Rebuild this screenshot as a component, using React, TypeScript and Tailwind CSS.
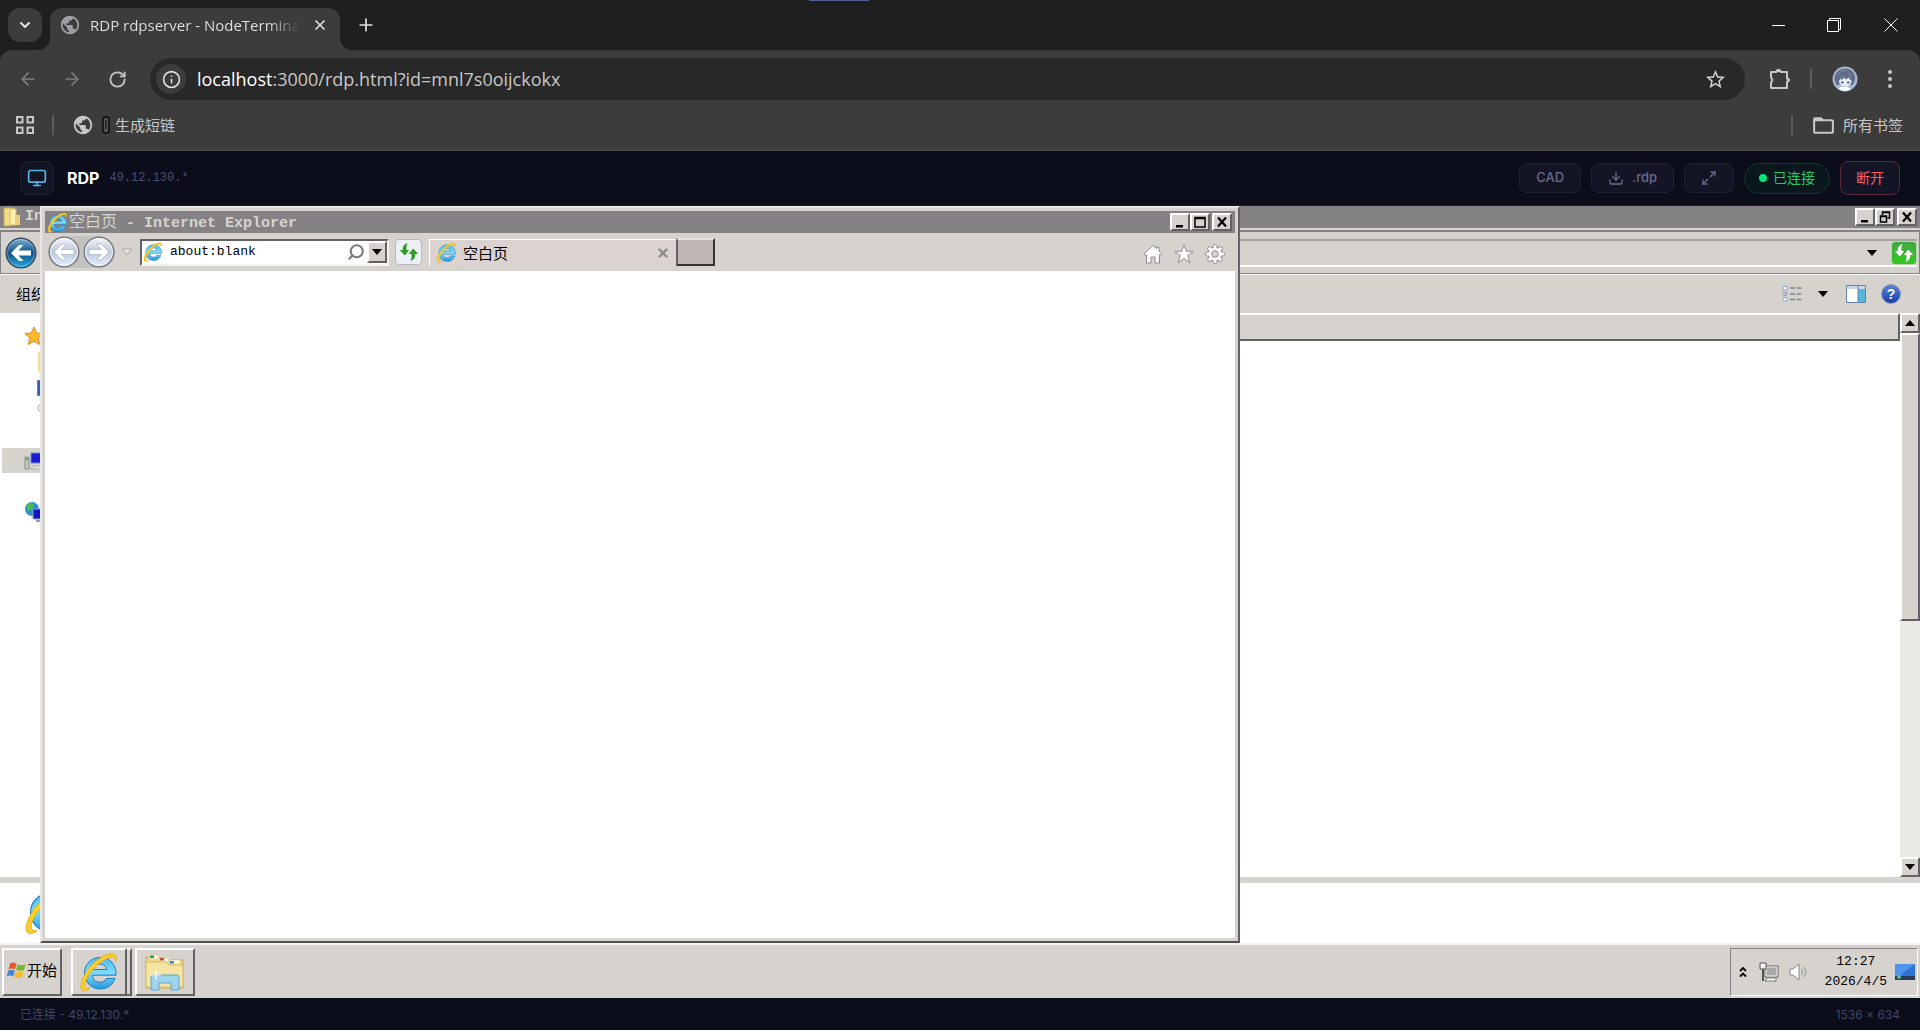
import React from "react"
import {
  ChevronDown,
  ArrowLeft,
  ArrowRight,
  RotateCw,
  X,
  Plus,
  Info,
  Monitor,
  Download,
  Maximize2,
  Search,
} from "lucide-react"
import { MdPublic, MdStarBorder, MdFolderOpen } from "react-icons/md"

const cjk = "font-['Noto_Sans_CJK_SC',sans-serif]"
const mono = "font-['Liberation_Mono','Noto_Sans_CJK_SC',monospace]"

// classic Windows bevels
const raised =
  "bg-[#d6d3ce] border-2 border-t-white border-l-white border-b-[#636163] border-r-[#636163]"
const sunken =
  "border-2 border-t-[#636163] border-l-[#636163] border-b-[#f4f2ef] border-r-[#f4f2ef]"

function IELogo({ className }: { className: string }) {
  return (
    <svg viewBox="0 0 40 40" className={className} aria-hidden="true">
      <defs>
        <linearGradient id="ieBlue" x1="0" y1="0" x2="0" y2="1">
          <stop offset="0" stopColor="#4fbdf0" />
          <stop offset=".5" stopColor="#7fdcfb" />
          <stop offset="1" stopColor="#2795dd" />
        </linearGradient>
      </defs>
      <path
        d="M21 5.500C12 5.500 5.500 12.500 5.500 21S12 37 21 37c7.500 0 13-4 15-10.500h-8.500c-1.300 2.400-3.400 3.700-6.500 3.700-4.500 0-7.300-2.700-7.500-7H37C37.600 12.500 31 5.500 21 5.500zM13.700 17.500c.8-3.400 3.300-5.500 7.100-5.500s6.300 2.100 7 5.500z"
        fill="url(#ieBlue)"
        stroke="#1c7fc4"
        strokeWidth="1"
      />
      <path
        d="M36.500 9.500C38 6 37.500 3 34.500 2 27 0 13 10 6 22 2 29 0 37 4 38.500c2 .8 4.500-.3 7-2.300-7 1.600-6-5.200-1.500-12.700C15 14.500 26 5.500 33 5.200c2.500 0 3.200 1.800 3.500 4.300z"
        fill="#f9cf2c"
        stroke="#e0a512"
        strokeWidth=".7"
      />
    </svg>
  )
}

function OrbIcon({ blue, flip, className }: { blue?: boolean; flip?: boolean; className: string }) {
  const id = blue ? "orbBlue" : "orbPale"
  return (
    <svg viewBox="0 0 32 32" className={className} aria-hidden="true">
      <defs>
        <linearGradient id={id} x1="0" y1="0" x2="0" y2="1">
          <stop offset="0" stopColor={blue ? "#7fb4d4" : "#f4f6fb"} />
          <stop offset=".5" stopColor={blue ? "#0d4f86" : "#bcc8dc"} />
          <stop offset="1" stopColor={blue ? "#25b3ea" : "#e6f2ff"} />
        </linearGradient>
      </defs>
      <circle cx="16" cy="16" r="14.800" fill={`url(#${id})`} stroke={blue ? "#3c4e60" : "#7c7e86"} strokeWidth="1.500" />
      <circle cx="16" cy="16" r="13.500" fill="none" stroke="#fff" strokeOpacity={blue ? ".3" : ".8"} />
      <path
        d="M6 16l8-8h4.500l-5 5.500H26v5H13.500l5 5.500H14z"
        fill="#fff"
        stroke={blue ? "none" : "#a0aabe"}
        strokeWidth=".6"
        transform={flip ? "translate(32 0) scale(-1 1)" : undefined}
      />
    </svg>
  )
}

function RefreshArrows({ color, className }: { color: string; className: string }) {
  return (
    <svg viewBox="0 0 20 20" className={className} fill={color} aria-hidden="true">
      <path d="M8.500 1C5 2 3.700 4.500 3.700 8H.8l5 5.500 4.400-5.500H7.500C7.300 5.500 7.500 3 8.500 1z" />
      <path d="M11.500 19c3.500-1 4.800-3.500 4.800-7h2.900l-5-5.500L9.800 12h2.700c.2 2.500 0 5-1 7z" />
    </svg>
  )
}

function Caret({ className = "" }: { className?: string }) {
  return (
    <svg viewBox="0 0 10 6" className={`w-2.5 h-1.5 ${className}`} aria-hidden="true">
      <path d="M0 0h10L5 6z" fill="currentColor" />
    </svg>
  )
}

function CaptionButtons({ restore }: { restore?: boolean }) {
  const button = `w-5 h-[18px] flex items-center justify-center text-black ${raised}`
  return (
    <div className="flex shrink-0">
      <button aria-label="Minimize" className={button}>
        <svg viewBox="0 0 14 12" className="w-3.5 h-3">
          <path d="M3 9h7v2.500H3z" />
        </svg>
      </button>
      <button aria-label={restore ? "Restore" : "Maximize"} className={button}>
        <svg viewBox="0 0 14 12" className="w-3.5 h-3" fill="none" stroke="#000">
          {restore ? (
            <>
              <path d="M4.500 4V1h7v6H9.500M4.500 1.500h7" strokeWidth="1.500" />
              <path d="M2.500 5h6v6h-6zM2.500 5.500h6" strokeWidth="1.500" />
            </>
          ) : (
            <path d="M2 1.500h10v9.500H2zM2 2.500h10" strokeWidth="1.500" />
          )}
        </svg>
      </button>
      <button aria-label="Close" className={`${button} ml-0.5`}>
        <svg viewBox="0 0 14 12" className="w-3.5 h-3" stroke="#000" strokeWidth="2.200">
          <path d="M3 1.500l8 9M11 1.500l-8 9" />
        </svg>
      </button>
    </div>
  )
}

function BrowserChrome() {
  return (
    <header className="bg-[#1f1f1f] text-[#e3e3e3] font-['Open_Sans','Noto_Sans_CJK_SC',sans-serif]">
      {/* Tab strip */}
      <div className="relative flex h-[50px] pl-2">
        <div className="absolute top-0 left-[809px] w-[60px] h-px bg-[#565f94]" />
        <button aria-label="Search tabs" className="mt-2 w-[34px] h-[34px] rounded-xl bg-[#3c3c3c] flex items-center justify-center">
          <ChevronDown className="w-4 h-4" strokeWidth={3} />
        </button>
        <div className="relative ml-2 mt-2 w-[290px] h-[42px] rounded-t-xl bg-[#3c3c3c] flex items-center pl-[9px] pr-3 pb-2">
          <svg viewBox="0 0 12 12" className="absolute -left-3 bottom-0 w-3 h-3" fill="#3c3c3c">
            <path d="M12 0v12H0A12 12 0 0 0 12 0z" />
          </svg>
          <svg viewBox="0 0 12 12" className="absolute -right-3 bottom-0 w-3 h-3" fill="#3c3c3c">
            <path d="M0 0v12h12A12 12 0 0 1 0 0z" />
          </svg>
          <MdPublic className="w-[22px] h-[22px] text-[#9aa0a6] shrink-0" />
          <span className="ml-[9px] flex-1 overflow-hidden whitespace-nowrap text-[15px] leading-5 bg-gradient-to-r from-[#e3e3e3] from-85% to-[#3c3c3c] bg-clip-text text-transparent">
            RDP rdpserver - NodeTerminal
          </span>
          <button aria-label="Close tab" className="ml-3">
            <X className="w-4 h-4" strokeWidth={2.5} />
          </button>
        </div>
        <button aria-label="New tab" className="ml-4">
          <Plus className="w-5 h-5" />
        </button>
        <div className="ml-auto flex">
          <button aria-label="Minimize window" className="w-14 flex items-center justify-center">
            <span className="w-[13px] h-px bg-white" />
          </button>
          <button aria-label="Restore window" className="w-14 flex items-center justify-center">
            <svg viewBox="0 0 14 14" className="w-3.5 h-3.5" fill="none" stroke="#fff">
              <path d="M.5 2.500h11v11H.5zM2.500 2.500v-2h11v11h-2" />
            </svg>
          </button>
          <button aria-label="Close window" className="w-[58px] flex items-center justify-center">
            <svg viewBox="0 0 14 14" className="w-3.5 h-3.5" stroke="#fff">
              <path d="M.5.5l13 13M13.500.5l-13 13" />
            </svg>
          </button>
        </div>
      </div>

      {/* Address bar */}
      <div className="bg-[#3c3c3c] rounded-t-xl border-b border-[#4a4a4a]">
        <div className="flex items-center h-[58px] pl-[18px] pr-5">
          <button aria-label="Back" className="text-[#7d7d7d]">
            <ArrowLeft className="w-5 h-5" />
          </button>
          <button aria-label="Forward" className="ml-6 text-[#7d7d7d]">
            <ArrowRight className="w-5 h-5" />
          </button>
          <button aria-label="Reload" className="ml-[26px] text-[#c7c7c7]">
            <RotateCw className="w-[19px] h-[19px]" strokeWidth={2.3} />
          </button>
          <div className="ml-[23px] flex-1 h-[42px] rounded-full bg-[#282828] flex items-center pl-1.5 pr-[18px]">
            <button aria-label="Site information" className="w-[30px] h-[30px] rounded-full bg-[#3c3c3c] flex items-center justify-center">
              <Info className="w-[19px] h-[19px]" />
            </button>
            <div className="ml-[11px] flex-1 text-lg leading-6 text-[#c7c7c7]">
              <span className="text-white">localhost</span>:3000/rdp.html?id=mnl7s0oijckokx
            </div>
            <button aria-label="Bookmark this page" className="text-[#d0d0d0]">
              <MdStarBorder className="w-[23px] h-[23px]" />
            </button>
          </div>
          <button aria-label="Extensions" className="ml-6 text-[#c7c7c7]">
            <svg viewBox="0 0 22 22" className="w-[22px] h-[22px]" fill="none" stroke="currentColor" strokeWidth="2" strokeLinejoin="round">
              <path d="M2 4h5.500a2 2 0 0 1 4 0H18v6.500a2 2 0 0 1 0 3.500v6H2v-5.500a3.200 3.200 0 0 0 0-5z" />
              <path d="M7.500 3.500a2 2 0 0 1 4 0zM18.500 10a2 2 0 0 1 0 4z" fill="currentColor" strokeWidth="1" />
            </svg>
          </button>
          <span className="ml-[19px] w-0.5 h-5 bg-[#5c5c5c]" />
          <button aria-label="Profile" className="ml-5">
            <svg viewBox="0 0 26 26" className="w-[26px] h-[26px]">
              <circle cx="13" cy="13" r="12.500" fill="#a9b8d0" />
              <path d="M2.500 14C2 7 7 2.500 13.500 2.500S24 8 23 14.500L20.500 19 7 18.500 4.500 19z" fill="#5f6e8b" />
              <path d="M7 15l1.500-2.500 1 1.500 3-2.500 1 2 3.500-2 .5 2 2 1c0 3.500-2.500 6-6 6S7 18.500 7 15z" fill="#e6ebf3" />
              <path d="M6.500 23l2.500-2.500 3 .500 3-.500 4 2.500a12 12 0 0 1-12.500 0z" fill="#fff" />
              <path d="M9 16.500h2.500M15 16.500h2.500" stroke="#3d4a63" strokeWidth="1.500" />
              <path d="M6 8c2-3 5-4 8-3.500M11 9l-2 4M17 7l1 5" stroke="#8593ad" strokeWidth=".8" fill="none" />
            </svg>
          </button>
          <button aria-label="Menu" className="ml-[22px] px-1 text-[#c7c7c7]">
            <svg viewBox="0 0 4 18" className="w-3 h-[18px]" fill="currentColor">
              <circle cx="2" cy="2" r="2" />
              <circle cx="2" cy="9" r="2" />
              <circle cx="2" cy="16" r="2" />
            </svg>
          </button>
        </div>

        {/* Bookmarks */}
        <div className="flex items-center h-[42px] pb-2 pl-4 pr-[17px] text-[15px] leading-5 text-[#c7c7c7]">
          <button aria-label="Apps">
            <svg viewBox="0 0 18 18" className="w-[18px] h-[18px]" fill="none" stroke="currentColor" strokeWidth="2">
              <path d="M1 1h5.500v5.500H1zM11.500 1H17v5.500h-5.500zM1 11.500h5.500V17H1zM11.500 11.500H17V17h-5.500z" />
            </svg>
          </button>
          <span className="ml-[18px] w-0.5 h-5 bg-[#5c5c5c]" />
          <a href="#" className="ml-[18px] flex items-center">
            <MdPublic className="w-[22px] h-[22px]" />
            <svg viewBox="0 0 8 18" className="ml-2 w-2 h-[18px]" aria-hidden="true">
              <rect x="1" y="1" width="6" height="16" rx="2.500" fill="#555" stroke="#0c0c0c" strokeWidth="1.500" />
              <path d="M4 4v9" stroke="#222" strokeWidth="1.500" />
            </svg>
            <span className="ml-[5px]">生成短链</span>
          </a>
          <span className="ml-auto w-0.5 h-5 bg-[#5c5c5c]" />
          <button className="ml-[18px] flex items-center">
            <MdFolderOpen className="w-[25px] h-[25px]" />
            <span className="ml-[7px]">所有书签</span>
          </button>
        </div>
      </div>
    </header>
  )
}

function RdpHeader() {
  const button = "h-[30px] px-4 rounded-lg border border-[#1f2032] bg-[#131525] text-[#6a6b8c] flex items-center gap-2"
  return (
    <div className="flex items-center h-[55px] px-5 bg-[#0b0d1a] border-b border-[#1b1c2c] font-['Inter','Noto_Sans_CJK_SC',sans-serif] text-[13px] font-medium">
      <div className="w-[34px] h-[34px] rounded-lg border border-[#1f2032] bg-[#131525] flex items-center justify-center">
        <Monitor className="w-5 h-5 text-[#4fb6e8]" />
      </div>
      <h1 className="ml-[13px] text-base font-bold text-white">RDP</h1>
      <span className={`ml-2.5 text-xs font-normal text-[#4c4d70] ${mono}`}>49.12.130.*</span>
      <div className="ml-auto flex items-center gap-2.5">
        <button className={button}>CAD</button>
        <button className={button}>
          <Download className="w-4 h-4" />
          .rdp
        </button>
        <button aria-label="Fullscreen" className={button}>
          <Maximize2 className="w-4 h-4" />
        </button>
        <div className="h-[31px] px-3.5 rounded-full border border-[#0f3a33] bg-[#0a171d] text-sm font-normal text-[#22c96f] flex items-center gap-1.5">
          <span className="w-2 h-2 rounded-full bg-[#00e676]" />
          已连接
        </div>
        <button className="h-[34px] px-[15px] rounded-lg border border-[#57293a] bg-[#131525] text-sm font-normal text-[#ff5a64]">
          断开
        </button>
      </div>
    </div>
  )
}

function ExplorerWindow() {
  return (
    <section className={`h-full flex flex-col bg-[#d6d3ce] text-black ${cjk}`}>
      <div className="flex items-center h-[22px] pl-[3px] pr-[3px] bg-[#848284] text-[#d6d3ce]">
        <svg viewBox="0 0 18 20" className="w-[18px] h-5" aria-hidden="true">
          <path d="M1 1h9v3l-3 15H1z" fill="#f3dd86" stroke="#c9a94a" />
          <path d="M7 2h6v16H7z" fill="#fbeeb0" stroke="#d9bd60" />
          <path d="M12 8h5v10h-5z" fill="#ead07a" />
        </svg>
        <span className={`ml-1 mr-auto w-[15px] overflow-hidden text-[15px] leading-5 font-bold ${mono}`}>In</span>
        <CaptionButtons restore />
      </div>

      <div className="mt-0.5 h-11 border border-[#848284] border-t-2 flex items-center pl-1 pr-0.5">
        <OrbIcon blue className="w-8 h-8" />
        <div className="ml-24 flex-1 h-7 border-y-2 border-t-[#a5a2a0] border-b-white flex items-center justify-end gap-3.5">
          <button aria-label="Previous locations">
            <Caret />
          </button>
          <button aria-label="Refresh" className="w-[26px] h-6 rounded-sm border border-[#b5d8b0] bg-gradient-to-b from-[#3fa83f] to-[#35c81c] flex items-center justify-center">
            <RefreshArrows color="#fff" className="w-5 h-5" />
          </button>
        </div>
      </div>

      <div className="h-[39px] border-t border-white flex items-center pl-4 pr-[19px] text-[15px]">
        <button className="w-6 overflow-hidden whitespace-nowrap text-left">组织</button>
        <button aria-label="Change view" className="ml-auto">
          <svg viewBox="0 0 20 18" className="w-5 h-[18px]" fill="none">
            <path d="M1 1.500h4v3.500H1zM1 7h4v3.500H1zM1 12.500h4V16H1z" fill="#fff" stroke="#8fa4c4" />
            <path d="M8 3h5M14.500 3h5M8 9h5M14.500 9h5M8 14.500h5M14.500 14.500h5" stroke="#7f8793" strokeWidth="1.500" />
            <path d="M2.500 8h1.500v1.500H2.500z" fill="#d0302a" />
          </svg>
        </button>
        <button aria-label="More views" className="ml-4">
          <Caret />
        </button>
        <button aria-label="Preview pane" className="ml-[18px]">
          <svg viewBox="0 0 20 18" className="w-5 h-[18px]">
            <path d="M.5.5h19v17H.5z" fill="#fff" stroke="#5f83ad" />
            <path d="M1 1h18v3H1z" fill="#c8d8ea" />
            <path d="M12 4h7v13h-7z" fill="#59b5dc" />
            <path d="M12 1v16" stroke="#5f83ad" />
          </svg>
        </button>
        <button aria-label="Help" className="ml-[15px] w-5 h-5 rounded-full border border-[#8f98b0] bg-gradient-to-b from-[#5b82dc] to-[#173ca8] text-white text-sm leading-4 font-bold font-['Liberation_Sans',sans-serif]">
          ?
        </button>
      </div>

      <div className="flex-1 flex min-h-0 bg-white">
        <nav className="w-60 shrink-0 pt-[13px]">
          <a href="#" aria-label="Favorites" className="block pl-6">
            <svg viewBox="0 0 20 20" className="block w-5 h-5">
              <path d="M10 1l2.700 6 6.300.6-4.700 4.300 1.400 6.600L10 15.200l-5.700 3.300 1.400-6.600L1 7.600 7.300 7z" fill="#fdb92c" stroke="#e08a2c" />
            </svg>
          </a>
          <a href="#" aria-label="Downloads" className="block mt-1.5 pl-[38px]">
            <span className="block w-4 h-5 bg-[#f2dd90]" />
          </a>
          <a href="#" aria-label="Desktop" className="block mt-2 pl-[37px]">
            <span className="block w-5 h-4 bg-[#2f5fae] border border-[#6c7fa0]" />
          </a>
          <a href="#" aria-label="Recent places" className="block mt-2 pl-[37px]">
            <span className="block w-4 h-2 rounded-full border-2 border-[#d0d0d0]" />
          </a>
          <a href="#" aria-label="Computer" className="mt-9 ml-0.5 h-[25px] bg-[#d6d3ce] flex items-center pl-[22px]">
            <svg viewBox="0 0 24 18" className="w-6 h-[18px]">
              <path d="M1 5h4v12H1z" fill="#c4c8c4" stroke="#8a8d8a" />
              <path d="M2 6h2v2H2z" fill="#3fae3f" />
              <path d="M7 1h16v10H7z" fill="#1a1ad0" stroke="#6d86d8" />
              <path d="M9 14h14v3H7z" fill="#e4e4e4" stroke="#b0b0b0" />
            </svg>
          </a>
          <a href="#" aria-label="Network" className="block mt-7 pl-6">
            <svg viewBox="0 0 24 22" className="block w-6 h-[22px]">
              <circle cx="8" cy="8" r="7" fill="#2f8fd0" />
              <path d="M3 4l5-3 2 4-3 4-4 1zM8 11l4-2 2 3-4 3z" fill="#46c04a" />
              <path d="M9 8h14v10H9z" fill="#1515c0" stroke="#7fa0d8" />
              <path d="M12 20h9" stroke="#9aa0a8" strokeWidth="2" />
            </svg>
          </a>
        </nav>
        <div className="flex-1">
          <div className="h-7 bg-[#d6d3ce] border-2 border-t-white border-l-white border-b-[#636163] border-r-[#636163]" />
        </div>
        <div className="w-5 flex flex-col bg-[#ebe9e6]">
          <button aria-label="Scroll up" className={`h-5 flex items-center justify-center ${raised}`}>
            <Caret className="rotate-180" />
          </button>
          <div className={`h-[288px] ${raised}`} />
          <button aria-label="Scroll down" className={`mt-auto h-5 flex items-center justify-center ${raised}`}>
            <Caret />
          </button>
        </div>
      </div>
      <div className="h-[66px] bg-white border-t-[6px] border-[#d6d3ce] overflow-hidden pl-6 pt-1">
        <IELogo className="w-12 h-12" />
      </div>
    </section>
  )
}

function IEWindow() {
  return (
    <section className={`h-full flex flex-col p-[3px] bg-[#d6d3ce] text-black ${cjk} border-2 border-t-[#e8e6e2] border-l-[#e8e6e2] border-b-[#525052] border-r-[#636163]`}>
      <div className="flex items-center h-[22px] pl-0.5 pr-[3px] bg-[#848284] text-[#d6d3ce]">
        <IELogo className="w-[21px] h-[21px]" />
        <h2 className={`ml-px flex-1 text-[15px] leading-5 font-bold ${mono}`}>
          <span className={`text-base leading-5 font-normal ${cjk}`}>空白页</span> - Internet Explorer
        </h2>
        <CaptionButtons />
      </div>

      <div className="flex items-center h-[38px] pl-[3px] pr-2.5">
        <div className="flex items-center gap-[3px] rounded-full bg-[#c4c2bf]">
          <button aria-label="Back">
            <OrbIcon className="w-8 h-8" />
          </button>
          <button aria-label="Forward">
            <OrbIcon flip className="w-8 h-8" />
          </button>
        </div>
        <button aria-label="History" className="ml-1.5">
          <svg viewBox="0 0 12 8" className="w-3 h-2">
            <path d="M1 1h10L6 7z" fill="#e6e4e0" stroke="#aaa8a4" />
          </svg>
        </button>
        <div className={`ml-[7px] w-[249px] h-[27px] flex items-center bg-white pl-px ${sunken}`}>
          <IELogo className="w-5 h-5" />
          <input
            aria-label="Address"
            defaultValue="about:blank"
            className={`ml-[7px] flex-1 min-w-0 text-[13px] outline-none ${mono}`}
          />
          <Search className="w-[18px] h-[18px] -scale-x-100 text-[#7d7b7b]" strokeWidth={2.8} />
          <button aria-label="Show addresses" className={`ml-0.5 w-5 h-[22px] flex items-center justify-center ${raised}`}>
            <Caret />
          </button>
        </div>
        <button aria-label="Refresh" className="ml-1.5 w-[27px] h-[26px] rounded-sm border border-[#b8b8c4] bg-[#eeeff5] flex items-center justify-center">
          <RefreshArrows color="#2f9a2a" className="w-5 h-5" />
        </button>
        <div className="ml-[7px] w-[247px] h-[27px] flex items-center bg-[#dad3d0] border-t border-l border-white pl-1.5 pr-1.5">
          <IELogo className="w-[21px] h-[21px]" />
          <span className="ml-1.5 flex-1 text-[15px] leading-5">空白页</span>
          <button aria-label="Close tab" className="text-[#8c8a88]">
            <X className="w-3.5 h-3.5" strokeWidth={4} />
          </button>
        </div>
        <button aria-label="New tab" className="w-[39px] h-7 bg-[#bfb7b3] border-2 border-t-[#e4e0dc] border-l-[#636163] border-b-[#333] border-r-[#333]" />
        <div className="ml-auto pt-1 flex items-center gap-[11px]">
          <button aria-label="Home">
            <svg viewBox="0 0 20 20" className="w-5 h-5" fill="#fff" stroke="#8e8c8a" strokeLinejoin="round">
              <path d="M10 1.500l3.500 3.200V3h2.500v4l3 3-1.500 1.500-1-.8V19h-4.500v-6H8v6H3.500v-8.300l-1 .8L1 10z" />
            </svg>
          </button>
          <button aria-label="Favorites">
            <svg viewBox="0 0 20 20" className="w-5 h-5" fill="#fff" stroke="#8e8c8a" strokeLinejoin="round">
              <path d="M10 .7l2.300 6.600h7l-5.500 4.200 2 7.200L10 14.600l-5.800 4.100 2-7.200L.7 7.300h7z" />
            </svg>
          </button>
          <button aria-label="Tools">
            <svg viewBox="0 0 20 20" className="w-5 h-5">
              <g stroke="#8e8c8a" strokeWidth="5" strokeLinecap="round">
                <path d="M10 2.700v14.600M2.700 10h14.600M4.800 4.800l10.400 10.400M15.200 4.800L4.800 15.200" />
              </g>
              <circle cx="10" cy="10" r="7.200" fill="#8e8c8a" />
              <g stroke="#fff" strokeWidth="3">
                <path d="M10 1.200v17.600M1.200 10h17.600M3.800 3.800l12.400 12.400M16.200 3.800L3.800 16.200" />
              </g>
              <circle cx="10" cy="10" r="6.300" fill="#fff" />
              <circle cx="10" cy="10" r="3.300" fill="#d6d3ce" stroke="#8e8c8a" />
            </svg>
          </button>
        </div>
      </div>
      <div className="flex-1 bg-white" />
    </section>
  )
}

function Taskbar() {
  return (
    <footer className={`h-[55px] flex items-center gap-[9px] px-0.5 bg-[#d6d3ce] border-t-2 border-[#f4f2ef] text-black ${cjk}`}>
      <button className={`w-[60px] h-12 pb-1 flex items-center justify-center text-[15px] leading-5 ${raised}`}>
        <svg viewBox="0 0 20 18" className="w-5 h-[18px]" aria-hidden="true">
          <path d="M3 2.500c2.500-1.500 4.500-1 6.500.2L8 8.500C6 7.300 4 7 1.500 8.300z" fill="#e8592b" />
          <path d="M10.500 3.200c2 1.200 4.500 1.500 8 0L17 9c-3 1.300-5.500 1-8-.2z" fill="#79b82e" />
          <path d="M1.200 9.500c2.500-1.300 4.500-1 6.500.2L6.200 15.500C4.200 14.300 2.200 14-.3 15.300z" fill="#4487d6" />
          <path d="M8.700 10.200c2 1.200 4.500 1.500 8 0L15 16.200c-3 1.300-5.500 1-7.800-.2z" fill="#f4bd2b" />
        </svg>
        开始
      </button>
      <div className="flex gap-[3px]">
        <button aria-label="Internet Explorer" className="flex">
          <span className={`w-[56px] h-12 flex items-center justify-center ${raised}`}>
            <IELogo className="w-10 h-10" />
          </span>
          <span className="w-[5px] h-12 bg-[#d6d3ce] border-y-2 border-r-2 border-t-white border-b-[#636163] border-r-[#636163]" />
        </button>
        <button aria-label="Explorer" className={`w-[60px] h-12 flex items-center justify-center ${raised}`}>
          <svg viewBox="0 0 42 38" className="w-[42px] h-[38px]">
            <path d="M2 4h14l3 3h20v28H2z" fill="#efd88a" stroke="#c9a850" />
            <path d="M5 2h10v4H5zM16 5h9v4h-9zM26 7h10v4H26z" fill="#fdf9e6" stroke="#d8c88a" strokeWidth=".6" />
            <path d="M6 2.500h4v2.500H6z" fill="#2f9e38" />
            <path d="M16 5h4v2.500h-4z" fill="#cf4a2c" />
            <path d="M26 8h4v2.500h-4z" fill="#3a86d0" />
            <path d="M2 9h20l3 3h14v22H2z" fill="#f6e5a2" stroke="#d8bc66" />
            <path d="M7 37V24q0-2 2-2h24q2 0 2 2v13h-8v-7H15v7z" fill="#9fd4ee" stroke="#5aa6cc" />
            <path d="M12 17v10M7 22h10" stroke="#fff" strokeWidth="1.200" />
          </svg>
        </button>
      </div>
      <div className="ml-auto h-12 pl-2 pr-0.5 flex items-center border border-t-[#848284] border-l-[#848284] border-b-white border-r-white">
        <button aria-label="Show hidden icons">
          <svg viewBox="0 0 8 12" className="w-2 h-3" fill="none" stroke="#000" strokeWidth="1.800">
            <path d="M1 5l3-3 3 3M1 10.500l3-3 3 3" />
          </svg>
        </button>
        <svg viewBox="0 0 20 20" className="ml-3 w-5 h-5" aria-label="Network">
          <path d="M6 4h13v11H6z" fill="#a8a8a8" stroke="#5c5c5c" />
          <path d="M7 5h11v9H7z" fill="none" stroke="#f4f4f4" />
          <path d="M8 16h9v3H6z" fill="#fff" stroke="#777" />
          <path d="M1 1h6v6H1z" fill="#f6f6f6" stroke="#555" />
          <path d="M4 7v12" stroke="#555" strokeWidth="2" />
        </svg>
        <svg viewBox="0 0 20 18" className="ml-2.5 w-5 h-[18px]" fill="none" aria-label="Volume">
          <path d="M1 6h3l6-5v16l-6-5H1z" fill="#fff" stroke="#8a8a8a" />
          <path d="M12.500 6q2 3 0 6M15 4q3.500 5 0 10" stroke="#aaa" strokeWidth="1.500" />
        </svg>
        <div className={`ml-4 text-center text-[13px] leading-5 ${mono}`}>
          <p>12:27</p>
          <p>2026/4/5</p>
        </div>
        <button aria-label="Show desktop" className="ml-2">
          <svg viewBox="0 0 20 16" className="w-5 h-4">
            <path d="M0 0h20v16H0z" fill="#2f74d4" />
            <path d="M0 0h20L4 12H0z" fill="#4f94ea" />
            <path d="M0 12h20v4H0z" fill="#2c3c58" />
            <circle cx="4" cy="13" r="2" fill="#5cc0a0" />
          </svg>
        </button>
      </div>
    </footer>
  )
}

export default function App() {
  return (
    <div className="h-screen flex flex-col overflow-hidden bg-[#0b0d1a]">
      <BrowserChrome />
      <RdpHeader />
      {/* Remote desktop */}
      <main className="flex-1 min-h-0 flex flex-col">
        <div className="relative flex-1 min-h-0">
          <ExplorerWindow />
          <div className="absolute left-10 inset-y-0 w-[62.5%]">
            <IEWindow />
          </div>
        </div>
        <Taskbar />
      </main>
      <div className="h-8 px-5 pt-0.5 flex items-center justify-between text-xs text-[#44456a] font-['Inter','Noto_Sans_CJK_SC',sans-serif]">
        <span>已连接 - 49.12.130.*</span>
        <span>1536 × 634</span>
      </div>
    </div>
  )
}
